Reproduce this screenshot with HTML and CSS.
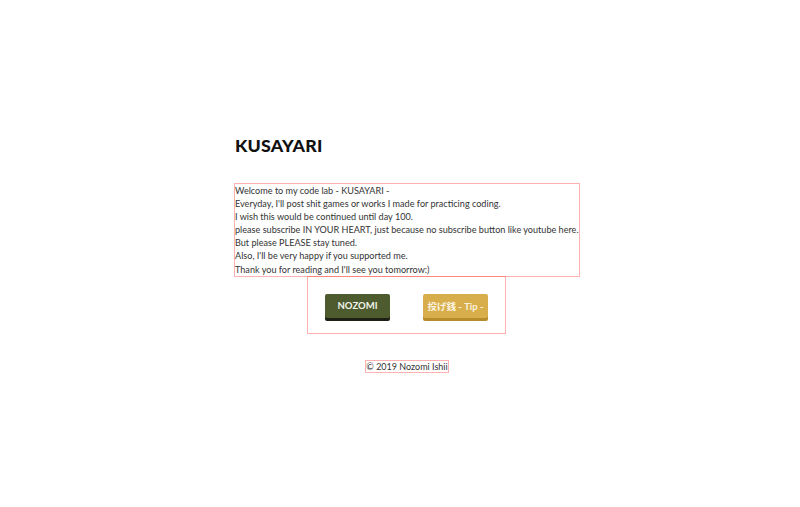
FILE: index.html
```html
<!DOCTYPE html>
<html>
<head>
<meta charset="utf-8">
<link rel="stylesheet" href="styles.css">
</head>
<body>
<main class="page">
  <h1 class="title">KUSAYARI</h1>
  <p class="intro">Welcome to my code lab - KUSAYARI -<br>
Everyday, I'll post shit games or works I made for practicing coding.<br>
I wish this would be continued until day 100.<br>
please subscribe IN YOUR HEART, just because no subscribe button like youtube here.<br>
But please PLEASE stay tuned.<br>
Also, I'll be very happy if you supported me.<br>
Thank you for reading and I'll see you tomorrow:)</p>
  <div class="actions">
    <a class="btn btn-green">NOZOMI</a>
    <a class="btn btn-gold">投げ銭 - Tip -</a>
  </div>
  <footer class="footer"><span class="copy">© 2019 Nozomi Ishii</span></footer>
</main>
</body>
</html>
```
FILE: styles.css
```css
html, body { margin: 0; padding: 0; background: #fff; }
body { font-family: Lato, "Noto Sans CJK JP", sans-serif; color: #222; }
.page {
  width: 344px;
  margin: 0 0 0 235px;
  padding-top: 135px;
  display: flex;
  flex-direction: column;
  align-items: center;
}
.title {
  align-self: flex-start;
  margin: 0;
  font-size: 17.8px;
  line-height: 20px;
  font-weight: 900;
  color: #111;
  letter-spacing: 0.2px;
}
.intro {
  align-self: stretch;
  margin: 29px 0 0;
  font-size: 9.1px;
  line-height: 13.1px;
  color: #333;
  outline: 1px solid rgba(255, 80, 80, 0.45);
  white-space: nowrap;
}
.actions {
  align-self: flex-start;
  margin: 1px 0 0 73px;
  width: 197px;
  height: 56px;
  box-sizing: border-box;
  padding: 17px 0 0 17px;
  display: flex;
  gap: 33px;
  align-items: flex-start;
  outline: 1px solid rgba(255, 80, 80, 0.45);
}
.btn {
  width: 65px;
  height: 24px;
  border-radius: 2px;
  display: flex;
  align-items: center;
  justify-content: center;
  font-size: 9.5px;
  font-weight: 700;
  color: #fff;
  text-decoration: none;
}
.btn-green { background: #4e5b2f; box-shadow: 0 3px 0 #1d2015; color: #f2f2ea; }
.btn-gold { background: #d8ae4c; box-shadow: 0 3px 0 #b58c2c; color: #fbf3df; }
.footer { margin-top: 21px; }
.copy {
  display: inline-block;
  font-size: 9px;
  line-height: 11px;
  color: #333;
  outline: 1px solid rgba(255, 80, 80, 0.45);
}
```
